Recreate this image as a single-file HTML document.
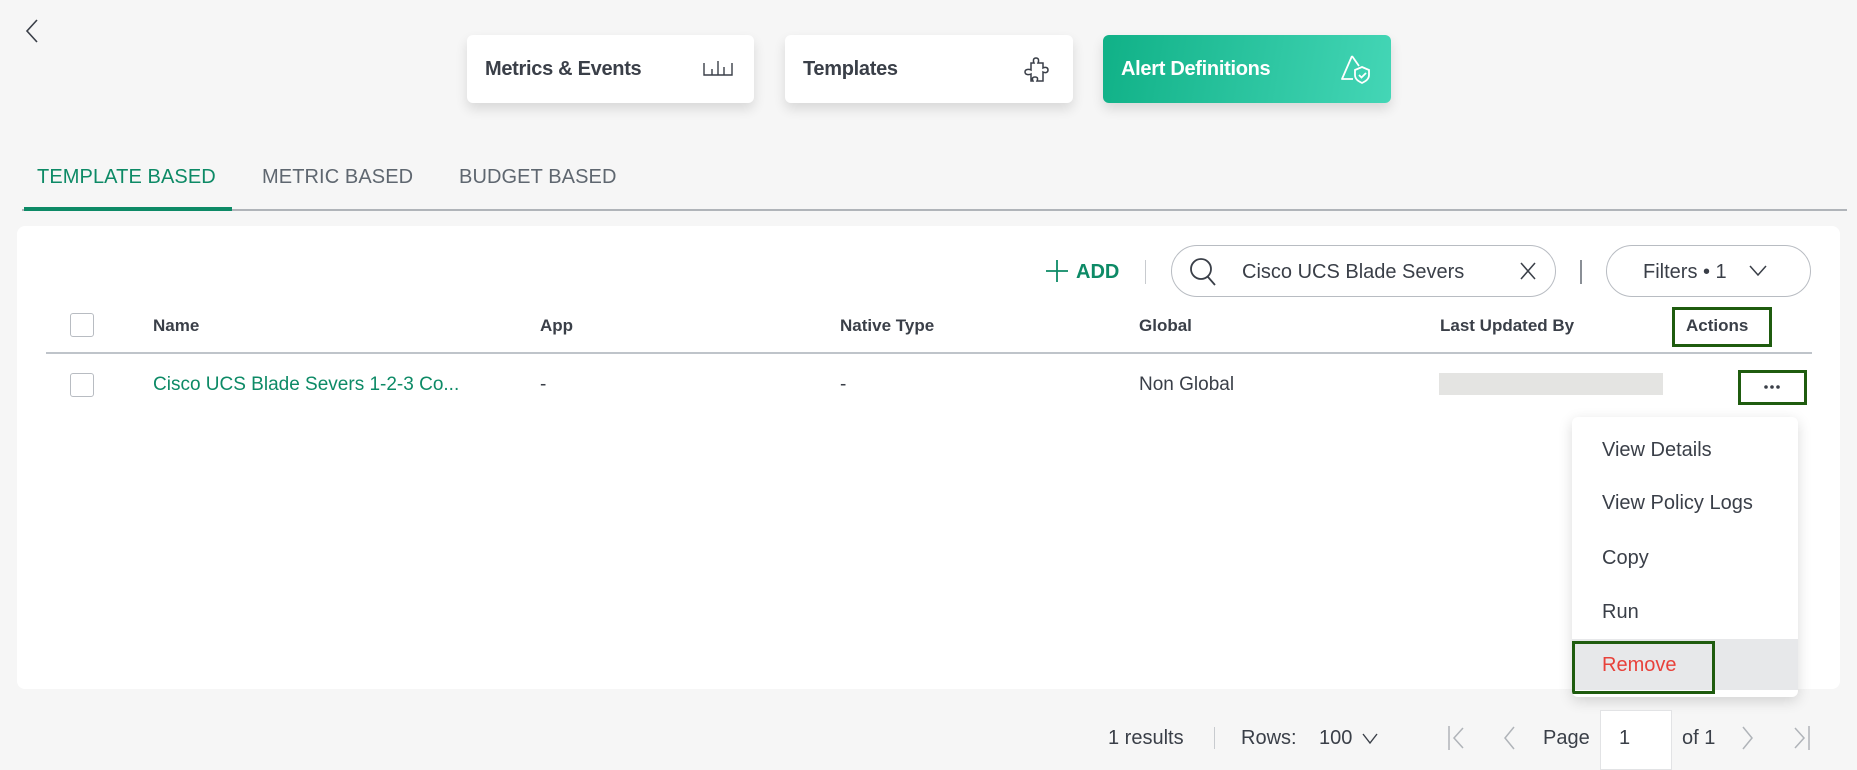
<!DOCTYPE html>
<html><head><meta charset="utf-8">
<style>
*{box-sizing:border-box;margin:0;padding:0}
body{width:1857px;height:761px;overflow:hidden;background:#f6f6f6;font-family:"Liberation Sans",sans-serif;position:relative;color:#3a3f48}
.a{position:absolute}
.card{position:absolute;top:35px;height:68px;border-radius:6px;background:#fff;box-shadow:0 6px 12px rgba(0,0,0,.12);font-weight:bold;font-size:20px;color:#3a3f48;padding-left:18px;line-height:68px;letter-spacing:-.3px}
.card svg{position:absolute;top:20px}
.tab{position:absolute;top:166px;font-size:20px;color:#5f6770;letter-spacing:.1px}
.th{position:absolute;top:316px;font-size:17px;font-weight:bold;color:#3a3f48}
.td{position:absolute;top:374px;font-size:19px;color:#3a3f48}
.cb{position:absolute;left:70px;width:24px;height:24px;border:1.5px solid #b8bcc2;border-radius:3px;background:#fff}
.mi{position:absolute;left:1602px;font-size:20px;color:#3a3f48}
.ft{position:absolute;top:727px;font-size:20px;color:#3a3f48}
</style></head><body>
<svg class="a" style="left:24px;top:18px" width="16" height="26" viewBox="0 0 16 26"><path d="M13 2 L3 13 L13 24" fill="none" stroke="#3a3f48" stroke-width="1.6"/></svg>

<div class="card" style="left:467px;width:287px">Metrics &amp; Events
<svg style="left:236px;top:24px" width="30" height="18" viewBox="0 0 30 18"><path d="M1 4V16H29V4M9 10V16M15 2V16M21 8V16" fill="none" stroke="#3a3f48" stroke-width="1.4"/></svg></div>
<div class="card" style="left:785px;width:288px">Templates
<svg style="left:236px;top:20px" width="30" height="30" viewBox="0 0 30 30"><path d="M10 8H13C12 6 12 3 15 3C18 3 18 6 17 8H22V13C24 12 27 12 27 15C27 18 24 18 22 17V26H16C17 24 17 22 14 22C11 22 11 24 12 26H10V19C8 20 4 20 4 17C4 14 8 14 10 15Z" fill="none" stroke="#3a3f48" stroke-width="1.5"/></svg></div>
<div class="card" style="left:1103px;width:288px;background:linear-gradient(100deg,#10b187,#44d6b6);color:#fff">Alert Definitions
<svg style="left:236px;top:17px" width="34" height="34" viewBox="0 0 34 34"><path d="M13 4 L3 27 H14 M13 4 L20 14" fill="none" stroke="#fff" stroke-width="1.8" stroke-linejoin="round"/><path d="M23 15 L30 18 V23 C30 27 27 29 23 31 C19 29 16 27 16 23 V18Z" fill="none" stroke="#fff" stroke-width="1.8"/><path d="M20 23 L22.5 25.5 L27 21" fill="none" stroke="#fff" stroke-width="1.8"/></svg></div>

<div class="tab" style="left:37px;color:#0d8a66">TEMPLATE BASED</div>
<div class="tab" style="left:262px">METRIC BASED</div>
<div class="tab" style="left:459px">BUDGET BASED</div>
<div class="a" style="left:22px;top:209px;width:1825px;height:2px;background:#b0b4b9"></div>
<div class="a" style="left:24px;top:207px;width:208px;height:4px;background:#0d8a66"></div>

<div class="a" style="left:17px;top:226px;width:1823px;height:463px;background:#fff;border-radius:8px"></div>

<svg class="a" style="left:1045px;top:259px" width="24" height="24" viewBox="0 0 24 24"><path d="M12 1V23M1 12H23" stroke="#0d8a66" stroke-width="1.8"/></svg>
<div class="a" style="left:1076px;top:261px;font-size:20px;font-weight:bold;color:#0d8a66">ADD</div>
<div class="a" style="left:1145px;top:260px;width:1px;height:24px;background:#c8cbcf"></div>
<div class="a" style="left:1171px;top:245px;width:385px;height:52px;border:1.5px solid #b8bcc2;border-radius:26px;background:#fff"></div>
<svg class="a" style="left:1189px;top:257px" width="28" height="30" viewBox="0 0 28 30"><circle cx="12" cy="12" r="10" fill="none" stroke="#3a3f48" stroke-width="1.8"/><path d="M19 20L26 28" stroke="#3a3f48" stroke-width="1.8"/></svg>
<div class="a" style="left:1242px;top:261px;font-size:20px;color:#3a3f48">Cisco UCS Blade Severs</div>
<svg class="a" style="left:1520px;top:262px" width="16" height="18" viewBox="0 0 16 18"><path d="M1 1L15 17M15 1L1 17" stroke="#3a3f48" stroke-width="1.5"/></svg>
<div class="a" style="left:1580px;top:260px;width:1.5px;height:24px;background:#8a8f96"></div>
<div class="a" style="left:1606px;top:245px;width:205px;height:52px;border:1.5px solid #b8bcc2;border-radius:26px;background:#fff"></div>
<div class="a" style="left:1643px;top:261px;font-size:20px;color:#3a3f48">Filters • 1</div>
<svg class="a" style="left:1749px;top:265px" width="18" height="12" viewBox="0 0 18 12"><path d="M1 1L9 10L17 1" fill="none" stroke="#3a3f48" stroke-width="1.5"/></svg>

<div class="cb" style="top:313px"></div>
<div class="th" style="left:153px">Name</div>
<div class="th" style="left:540px">App</div>
<div class="th" style="left:840px">Native Type</div>
<div class="th" style="left:1139px">Global</div>
<div class="th" style="left:1440px">Last Updated By</div>
<div class="a" style="left:1672px;top:307px;width:100px;height:40px;border:3px solid #1f5c0f"></div>
<div class="th" style="left:1686px">Actions</div>
<div class="a" style="left:46px;top:352px;width:1766px;height:1.5px;background:#bfc4ca"></div>

<div class="cb" style="top:373px"></div>
<div class="td" style="left:153px;color:#0d8a66">Cisco UCS Blade Severs 1-2-3 Co...</div>
<div class="td" style="left:540px">-</div>
<div class="td" style="left:840px">-</div>
<div class="td" style="left:1139px">Non Global</div>
<div class="a" style="left:1439px;top:373px;width:224px;height:22px;background:#e4e4e2"></div>
<div class="a" style="left:1738px;top:370px;width:69px;height:35px;border:3px solid #1f5c0f"></div>
<svg class="a" style="left:1762px;top:384px" width="20" height="6" viewBox="0 0 20 6"><circle cx="4" cy="3" r="1.8" fill="#3a3f48"/><circle cx="10" cy="3" r="1.8" fill="#3a3f48"/><circle cx="16" cy="3" r="1.8" fill="#3a3f48"/></svg>

<div class="a" style="left:1572px;top:417px;width:226px;height:280px;background:#fff;border-radius:6px;box-shadow:0 4px 14px rgba(0,0,0,.15);overflow:hidden">
<div class="a" style="left:0;top:222px;width:226px;height:51px;background:#e7e8ea"></div>
<div class="a" style="left:0;top:224px;width:143px;height:53px;border:3px solid #1f5c0f"></div>
</div>
<div class="mi" style="top:439px">View Details</div>
<div class="mi" style="top:492px">View Policy Logs</div>
<div class="mi" style="top:547px">Copy</div>
<div class="mi" style="top:601px">Run</div>
<div class="mi" style="top:654px;color:#e8423b">Remove</div>

<div class="ft" style="left:1108px">1 results</div>
<div class="a" style="left:1214px;top:727px;width:1px;height:22px;background:#c8cbcf"></div>
<div class="ft" style="left:1241px">Rows:</div>
<div class="ft" style="left:1319px">100</div>
<svg class="a" style="left:1362px;top:733px" width="16" height="12" viewBox="0 0 16 12"><path d="M1 1L8 10L15 1" fill="none" stroke="#3a3f48" stroke-width="1.4"/></svg>
<svg class="a" style="left:1447px;top:724px" width="18" height="28" viewBox="0 0 18 28"><path d="M2 2V26M16 4L7 14L16 24" fill="none" stroke="#b0b4b9" stroke-width="1.5"/></svg>
<svg class="a" style="left:1502px;top:724px" width="14" height="28" viewBox="0 0 14 28"><path d="M12 3L3 14L12 25" fill="none" stroke="#b0b4b9" stroke-width="1.5"/></svg>
<div class="ft" style="left:1543px">Page</div>
<div class="a" style="left:1600px;top:710px;width:72px;height:60px;background:#fff;border:1px solid #e2e3e5"></div>
<div class="ft" style="left:1619px">1</div>
<div class="ft" style="left:1682px">of 1</div>
<svg class="a" style="left:1741px;top:724px" width="14" height="28" viewBox="0 0 14 28"><path d="M2 3L11 14L2 25" fill="none" stroke="#b0b4b9" stroke-width="1.5"/></svg>
<svg class="a" style="left:1793px;top:724px" width="18" height="28" viewBox="0 0 18 28"><path d="M16 2V26M2 4L11 14L2 24" fill="none" stroke="#b0b4b9" stroke-width="1.5"/></svg>
</body></html>
